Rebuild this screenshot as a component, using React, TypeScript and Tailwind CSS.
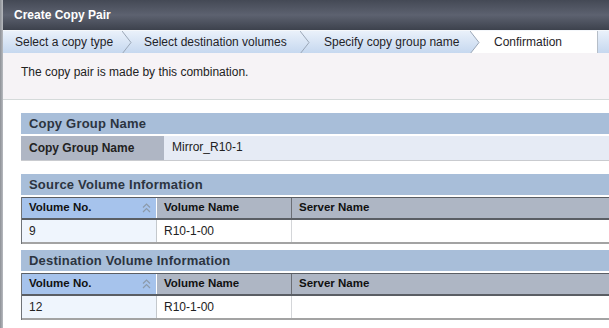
function Chevron({ active }: { active?: boolean }) {
  return (
    <svg width="10" height="23" viewBox="0 0 10 23" className="shrink-0">
      {active && <polygon points="0,0 10,0 10,23 0,23 9,11.5" fill="#ffffff" />}
      <polyline points="0,0 9,11.5 0,23" fill="none" stroke="#9aa6b6" strokeWidth="1" />
    </svg>
  );
}

function SortIcon() {
  return (
    <svg width="9" height="10" viewBox="0 0 9 10" className="shrink-0">
      <polyline points="1,4.5 4.5,1 8,4.5" fill="none" stroke="#8c9aaa" strokeWidth="1.2" />
      <polyline points="1,9 4.5,5.5 8,9" fill="none" stroke="#8c9aaa" strokeWidth="1.2" />
    </svg>
  );
}

function SectionHeader({ title }: { title: string }) {
  return (
    <div className="h-[21px] bg-[#a8bed9] pl-2 flex items-center text-[13px] tracking-[0.2px] font-bold text-[#2c3440]">
      {title}
    </div>
  );
}

function VolumeTable({ no, name }: { no: string; name: string }) {
  return (
    <div className="mt-[2px] border-l border-[#6f7378]">
      <div className="flex h-[23px] border-t border-b-2 border-t-[#5a5e64] border-b-[#5a5e64] text-[11.5px] font-bold text-[#111]">
        <div className="w-[135px] bg-[#a6c3ec] pl-[7px] pr-[5px] flex items-center justify-between border-r border-white">
          <span>Volume No.</span>
          <SortIcon />
        </div>
        <div className="w-[135px] bg-[#aeb6c4] pl-[7px] flex items-center border-r border-[#6a6e75]">Volume Name</div>
        <div className="flex-1 bg-[#aeb6c4] pl-[7px] flex items-center">Server Name</div>
      </div>
      <div className="flex h-[24px] border-b-2 border-[#a3a3a3] text-[12px] text-[#222]">
        <div className="w-[135px] bg-[#eff5fd] pl-[7px] flex items-center border-r border-[#c4c8cc]">{no}</div>
        <div className="w-[135px] bg-white pl-[7px] flex items-center border-r border-[#d4d6d9]">{name}</div>
        <div className="flex-1 bg-white" />
      </div>
    </div>
  );
}

export default function App() {
  return (
    <div
      className="w-[609px] h-[328px] overflow-hidden flex bg-white"
      style={{ fontFamily: '"Liberation Sans", Arial, sans-serif' }}
    >
      {/* window edge behind the dialog */}
      <div className="w-[3px] shrink-0 bg-gradient-to-r from-[#8d9096] to-[#b8bbc0]" />

      <div className="flex-1 flex flex-col min-w-0">
        {/* Title bar */}
        <div className="h-[30px] shrink-0 bg-gradient-to-b from-[#444955] via-[#5d6270] to-[#3d424d] flex items-center pl-[11px] text-[12px] font-bold text-white">
          Create Copy Pair
        </div>

        {/* Wizard steps */}
        <div className="h-[23px] shrink-0 flex bg-gradient-to-b from-[#eaf1fa] to-[#c6d8ef] border-t border-[#f4f7fb] text-[12px] text-[#1f2328]">
          <div className="w-[119px] pl-3 flex items-center">Select a copy type</div>
          <Chevron />
          <div className="w-[168px] pl-3 flex items-center">Select destination volumes</div>
          <Chevron />
          <div className="w-[160px] pl-[14px] flex items-center">Specify copy group name</div>
          <Chevron active />
          <div className="w-[118px] pl-[14px] flex items-center bg-white border-r border-[#b6bec8]">Confirmation</div>
          <div className="flex-1" />
        </div>

        {/* Description */}
        <div className="h-[47px] shrink-0 bg-[#f6f3f6] border-b border-[#d5dada] pl-[18px] pt-[10px] text-[12px] text-[#222]">
          The copy pair is made by this combination.
        </div>

        {/* Content */}
        <div className="flex-1 pl-[18px] pt-[13px]">
          <SectionHeader title="Copy Group Name" />
          <div className="mt-[2px] flex h-[25px] border-b border-[#c9cbcf] text-[12px]">
            <div className="w-[143px] bg-[#afb6c4] pl-2 flex items-center font-bold text-[#222]">Copy Group Name</div>
            <div className="flex-1 bg-[#e6ebf5] pl-2 pb-[3px] flex items-center text-[#222]">Mirror_R10-1</div>
          </div>

          <div className="mt-[13px]">
            <SectionHeader title="Source Volume Information" />
            <VolumeTable no="9" name="R10-1-00" />
          </div>

          <div className="mt-[6px]">
            <SectionHeader title="Destination Volume Information" />
            <VolumeTable no="12" name="R10-1-00" />
          </div>
        </div>
      </div>
    </div>
  );
}
